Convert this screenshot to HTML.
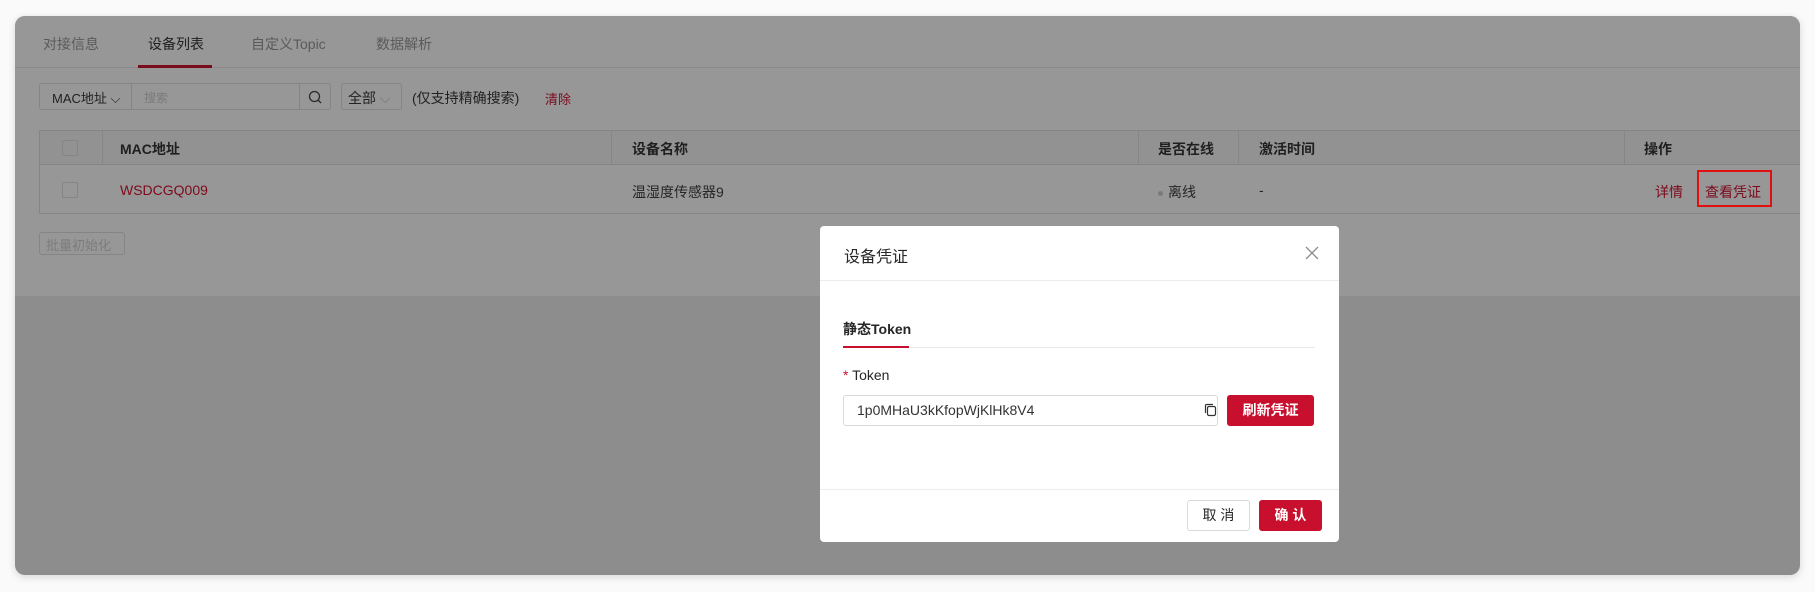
<!DOCTYPE html>
<html><head><meta charset="utf-8"><style>
*{box-sizing:border-box;margin:0;padding:0}
body{width:1815px;height:592px;background:#fafafa;font-family:"Liberation Sans","Noto Sans CJK SC",sans-serif;font-size:14px;color:#262626;position:relative;overflow:hidden}
.win{position:absolute;left:15px;top:16px;width:1785px;height:559px;border-radius:10px;background:#8d8d8d;overflow:hidden;box-shadow:0 2px 8px rgba(0,0,0,.15)}
.card{position:absolute;left:0;top:0;width:100%;height:280px;background:#979797}
.a{position:absolute;white-space:nowrap}
.tab{top:18px;font-size:14px;color:#5a5a5a}
.red{color:#7d0a1c}
.bx{position:absolute;border:1px solid #858585}
.modal{position:absolute;left:820px;top:226px;width:519px;height:316px;background:#fff;border-radius:4px}
</style></head><body>
<div class="win">
<div class="card"></div>
<div class="a tab" style="left:28px">对接信息</div>
<div class="a tab" style="left:133px;color:#1f1f1f">设备列表</div>
<div class="a tab" style="left:236px">自定义Topic</div>
<div class="a tab" style="left:361px">数据解析</div>
<div class="a" style="left:0;top:51px;width:100%;height:1px;background:#8a8a8a"></div>
<div class="a" style="left:123px;top:49px;width:74px;height:3px;background:#7a0d1b"></div>

<div class="bx" style="left:24px;top:67px;width:292px;height:27px;border-radius:3px"></div>
<div class="a" style="left:116px;top:67px;width:1px;height:27px;background:#858585"></div>
<div class="a" style="left:284px;top:67px;width:1px;height:27px;background:#858585"></div>
<div class="a" style="left:37px;top:72px;font-size:13px;color:#222">MAC地址 ⌵</div>
<div class="a" style="left:129px;top:73px;font-size:12px;color:#7a7a7a">搜索</div>
<svg class="a" style="left:292px;top:73px" width="16" height="16" viewBox="0 0 16 16"><circle cx="7.5" cy="7.5" r="5" fill="none" stroke="#2a2a2a" stroke-width="1.3"/><path d="M11 11l3 3" stroke="#2a2a2a" stroke-width="1.3"/></svg>
<div class="bx" style="left:326px;top:67px;width:61px;height:27px;border-radius:3px"></div>
<div class="a" style="left:333px;top:72px;font-size:14px;color:#222">全部 <span style="color:#777">⌵</span></div>
<div class="a" style="left:397px;top:72px;font-size:14px;color:#222">(仅支持精确搜索)</div>
<div class="a red" style="left:530px;top:73px;font-size:13px">清除</div>

<div class="bx" style="left:24px;top:114px;width:1776px;height:84px;border-right:none"></div>
<div class="a" style="left:25px;top:115px;width:1775px;height:34px;background:#929292;border-bottom:1px solid #848484"></div>
<div class="a" style="left:87px;top:115px;width:1px;height:34px;background:#868686"></div>
<div class="a" style="left:596px;top:115px;width:1px;height:34px;background:#868686"></div>
<div class="a" style="left:1123px;top:115px;width:1px;height:34px;background:#868686"></div>
<div class="a" style="left:1223px;top:115px;width:1px;height:34px;background:#868686"></div>
<div class="a" style="left:1609px;top:115px;width:1px;height:34px;background:#868686"></div>
<div class="bx" style="left:47px;top:124px;width:16px;height:16px;border-radius:2px"></div>
<div class="bx" style="left:47px;top:166px;width:16px;height:16px;border-radius:2px"></div>
<div class="a" style="left:105px;top:123px;font-weight:bold;color:#1f1f1f">MAC地址</div>
<div class="a" style="left:617px;top:123px;font-weight:bold;color:#1f1f1f">设备名称</div>
<div class="a" style="left:1143px;top:123px;font-weight:bold;color:#1f1f1f">是否在线</div>
<div class="a" style="left:1244px;top:123px;font-weight:bold;color:#1f1f1f">激活时间</div>
<div class="a" style="left:1629px;top:123px;font-weight:bold;color:#1f1f1f">操作</div>
<div class="a red" style="left:105px;top:166px">WSDCGQ009</div>
<div class="a" style="left:617px;top:166px">温湿度传感器9</div>
<div class="a" style="left:1143px;top:166px"><span style="display:inline-block;width:5px;height:5px;border-radius:50%;background:#7a7a7a;vertical-align:middle;margin-right:5px"></span>离线</div>
<div class="a" style="left:1244px;top:166px">-</div>
<div class="a red" style="left:1640px;top:166px">详情</div>
<div class="a" style="left:1682px;top:154px;width:75px;height:37px;border:2px solid #e01010"></div>
<div class="a red" style="left:1690px;top:166px">查看凭证</div>
<div class="bx" style="left:24px;top:216px;width:86px;height:23px;border-radius:3px;color:#7c7c7c;font-size:13px;padding:2px 0 0 6px">批量初始化</div>
</div>

<div class="modal">
<div class="a" style="left:24px;top:17px;font-size:16px;color:#262626">设备凭证</div>
<svg class="a" style="left:485px;top:20px" width="14" height="14" viewBox="0 0 14 14"><path d="M1 1l12 12M13 1L1 13" stroke="#8c8c8c" stroke-width="1.3"/></svg>
<div class="a" style="left:0;top:54px;width:100%;height:1px;background:#ececec"></div>
<div class="a" style="left:23px;top:93px;font-size:14px;font-weight:bold;color:#262626">静态Token</div>
<div class="a" style="left:23px;top:121px;width:472px;height:1px;background:#eaeaea"></div>
<div class="a" style="left:23px;top:120px;width:66px;height:2px;background:#c8102e"></div>
<div class="a" style="left:23px;top:141px;font-size:14px"><span style="color:#c8102e">*</span> Token</div>
<div class="a" style="left:23px;top:169px;width:375px;height:31px;border:1px solid #d9d9d9;border-radius:3px"></div>
<div class="a" style="left:37px;top:176px;font-size:14px;color:#333">1p0MHaU3kKfopWjKlHk8V4</div>
<svg class="a" style="left:384px;top:177px" width="14" height="14" viewBox="0 0 14 14"><rect x="3.5" y="3.5" width="8" height="9" rx="1.5" fill="none" stroke="#333" stroke-width="1.2"/><path d="M1.5 10V2.5a1 1 0 0 1 1-1H9" fill="none" stroke="#333" stroke-width="1.2"/></svg>
<div class="a" style="left:407px;top:169px;width:87px;height:31px;background:#c8102e;border-radius:3px;color:#fff;font-weight:bold;text-align:center;line-height:31px">刷新凭证</div>
<div class="a" style="left:0;top:263px;width:100%;height:1px;background:#ececec"></div>
<div class="a" style="left:367px;top:274px;width:63px;height:31px;border:1px solid #d9d9d9;border-radius:3px;text-align:center;line-height:29px">取 消</div>
<div class="a" style="left:439px;top:274px;width:63px;height:31px;background:#c8102e;border-radius:3px;color:#fff;font-weight:bold;text-align:center;line-height:31px">确 认</div>
</div>
</body></html>
